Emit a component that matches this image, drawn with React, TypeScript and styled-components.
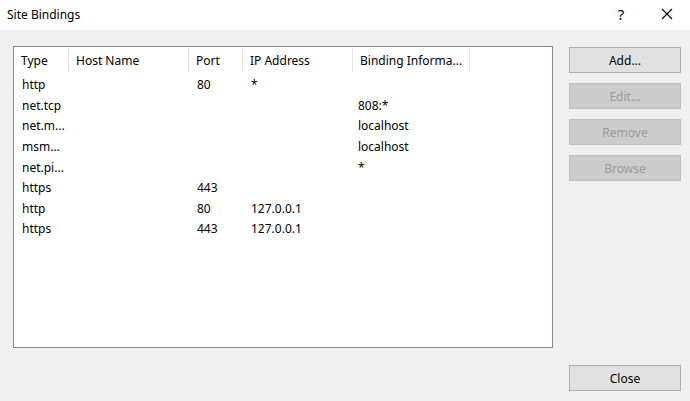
import styled, { createGlobalStyle } from 'styled-components';

const GlobalStyle = createGlobalStyle`
  html, body {
    margin: 0;
    padding: 0;
    background: #f0f0f0;
  }
  body {
    font-family: "Noto Sans", "Open Sans", "Liberation Sans", sans-serif;
    font-size: 12px;
    color: #000;
  }
`;

type Binding = {
  type: string;
  host: string;
  port: string;
  ip: string;
  info: string;
};

const bindings: Binding[] = [
  { type: 'http', host: '', port: '80', ip: '*', info: '' },
  { type: 'net.tcp', host: '', port: '', ip: '', info: '808:*' },
  { type: 'net.m...', host: '', port: '', ip: '', info: 'localhost' },
  { type: 'msm...', host: '', port: '', ip: '', info: 'localhost' },
  { type: 'net.pi...', host: '', port: '', ip: '', info: '*' },
  { type: 'https', host: '', port: '443', ip: '', info: '' },
  { type: 'http', host: '', port: '80', ip: '127.0.0.1', info: '' },
  { type: 'https', host: '', port: '443', ip: '127.0.0.1', info: '' },
];

const columns = ['Type', 'Host Name', 'Port', 'IP Address', 'Binding Informa...'];

export default function App() {
  return (
    <>
      <GlobalStyle />
      <SDialog>
        <STitleBar>
          <STitle>Site Bindings</STitle>
          <STitleButtons>
            <SHelp>?</SHelp>
            <SClose aria-label="Close">
              <svg width="12" height="12" viewBox="0 0 12 12">
                <path d="M1 1 L11 11 M11 1 L1 11" stroke="#000" strokeWidth="1.1" fill="none" />
              </svg>
            </SClose>
          </STitleButtons>
        </STitleBar>
        <SBody>
          <SListBox>
            <SHeaderRow>
              {columns.map(col => (
                <SHeaderCell key={col}>{col}</SHeaderCell>
              ))}
            </SHeaderRow>
            <SRows>
              {bindings.map((b, i) => (
                <SRow key={i}>
                  <SCell>{b.type}</SCell>
                  <SCell>{b.host}</SCell>
                  <SCell>{b.port}</SCell>
                  <SCell>{b.ip}</SCell>
                  <SCell $tight>{b.info}</SCell>
                </SRow>
              ))}
            </SRows>
          </SListBox>
          <SSide>
            <SButton>Add...</SButton>
            <SButton disabled>Edit...</SButton>
            <SButton disabled>Remove</SButton>
            <SButton disabled>Browse</SButton>
            <SBottomButton>Close</SBottomButton>
          </SSide>
        </SBody>
      </SDialog>
    </>
  );
}

const SDialog = styled.div`
  width: 690px;
  height: 401px;
  display: flex;
  flex-direction: column;
  background: #f0f0f0;
  overflow: hidden;
`;

const STitleBar = styled.div`
  height: 30px;
  flex: none;
  background: #fff;
  display: flex;
  align-items: center;
  justify-content: space-between;
  padding: 0 0 0 7px;
`;

const STitle = styled.div`
  font-size: 12px;
  margin-top: -2px;
`;

const STitleButtons = styled.div`
  display: flex;
  align-items: center;
  height: 100%;
`;

const SHelp = styled.div`
  width: 46px;
  text-align: center;
  font-size: 15px;
  margin-top: -3px;
`;

const SClose = styled.div`
  width: 46px;
  height: 100%;
  display: flex;
  align-items: center;
  justify-content: center;
  margin-top: -3px;
`;

const SBody = styled.div`
  flex: 1;
  display: grid;
  grid-template-columns: 540px 112px;
  column-gap: 16px;
  padding: 16px 0 10px 13px;
`;

const SListBox = styled.div`
  height: 302px;
  box-sizing: border-box;
  border: 1px solid #828790;
  background: #fff;
`;

const gridCols = '55px 120px 54px 110px 117px';

const SHeaderRow = styled.div`
  display: grid;
  grid-template-columns: ${gridCols};
  height: 26px;
`;

const SHeaderCell = styled.div`
  display: flex;
  align-items: center;
  padding-left: 7px;
  border-right: 1px solid #e5e5e5;
  white-space: nowrap;
  overflow: hidden;
  margin-top: 1px;
  margin-bottom: 1px;
`;

const SRows = styled.div`
  padding-top: 1.5px;
`;

const SRow = styled.div`
  display: grid;
  grid-template-columns: ${gridCols};
  height: 20.6px;
  align-items: center;
`;

const SCell = styled.div<{ $tight?: boolean }>`
  padding-left: ${p => (p.$tight ? '5px' : '8px')};
  white-space: nowrap;
  overflow: hidden;
`;

const SSide = styled.div`
  display: flex;
  flex-direction: column;
  gap: 10px;
  padding-top: 1px;
`;

const SButton = styled.button`
  height: 26px;
  width: 112px;
  box-sizing: border-box;
  font-family: inherit;
  font-size: 12px;
  padding: 0;
  border: 1px solid #adadad;
  background: #e1e1e1;
  color: #000;
  &:disabled {
    background: #cccccc;
    border-color: #bfbfbf;
    color: #9a9a9a;
  }
`;

const SBottomButton = styled(SButton)`
  margin-top: auto;
`;
